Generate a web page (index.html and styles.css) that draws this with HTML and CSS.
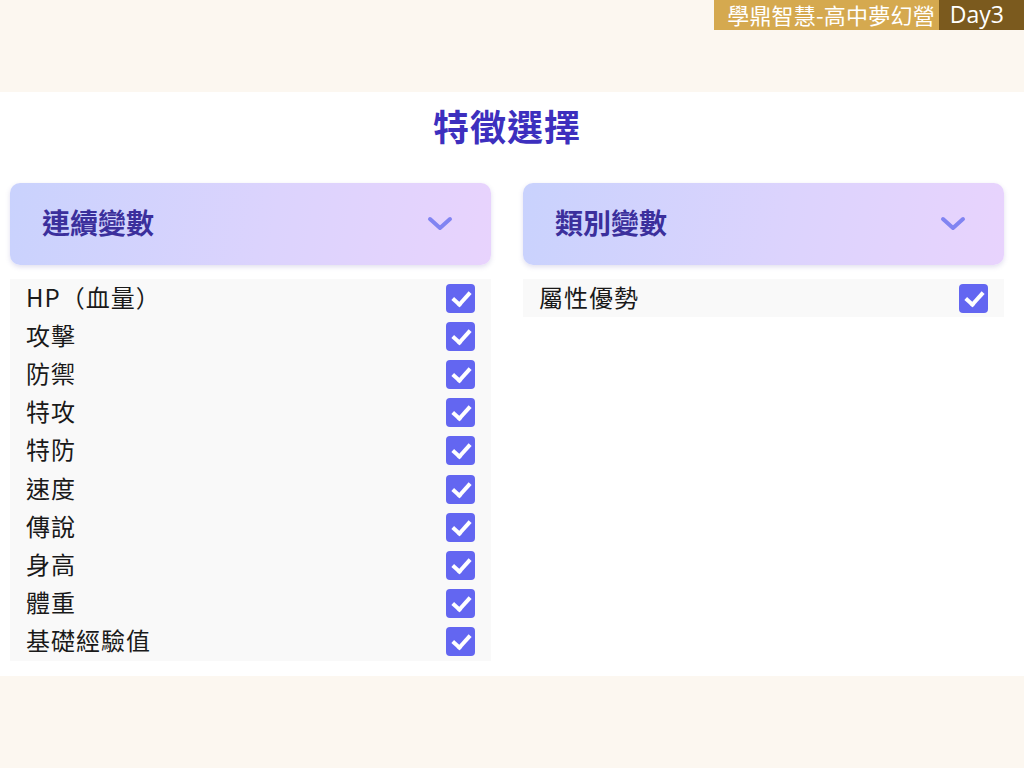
FILE: index.html
```html
<!DOCTYPE html>
<html lang="zh-Hant">
<head>
    <meta charset="UTF-8">
    <title>特徵選擇</title>
    <link rel="stylesheet" href="styles.css">
</head>
<body>
    <div class="badge">
        <span class="badge-name">學鼎智慧-高中夢幻營</span>
        <span class="badge-day">Day3</span>
    </div>

    <div class="panel">
        <h1 class="title">特徵選擇</h1>

        <div class="columns">
            <div class="column">
                <div class="group-header">
                    <span>連續變數</span>
                    <svg class="chevron" width="26" height="16" viewBox="0 0 26 16"><path d="M3 3 L13 12 L23 3" fill="none" stroke="#8184f2" stroke-width="4" stroke-linecap="round" stroke-linejoin="round"/></svg>
                </div>
                <ul class="var-list">
                    <li><span>HP（血量）</span><i class="check"></i></li>
                    <li><span>攻擊</span><i class="check"></i></li>
                    <li><span>防禦</span><i class="check"></i></li>
                    <li><span>特攻</span><i class="check"></i></li>
                    <li><span>特防</span><i class="check"></i></li>
                    <li><span>速度</span><i class="check"></i></li>
                    <li><span>傳說</span><i class="check"></i></li>
                    <li><span>身高</span><i class="check"></i></li>
                    <li><span>體重</span><i class="check"></i></li>
                    <li><span>基礎經驗值</span><i class="check"></i></li>
                </ul>
            </div>

            <div class="column">
                <div class="group-header">
                    <span>類別變數</span>
                    <svg class="chevron" width="26" height="16" viewBox="0 0 26 16"><path d="M3 3 L13 12 L23 3" fill="none" stroke="#8184f2" stroke-width="4" stroke-linecap="round" stroke-linejoin="round"/></svg>
                </div>
                <ul class="var-list">
                    <li><span>屬性優勢</span><i class="check"></i></li>
                </ul>
            </div>
        </div>
    </div>
</body>
</html>
```

FILE: styles.css
```css
* {
    margin: 0;
    padding: 0;
    box-sizing: border-box;
}

body {
    width: 1024px;
    height: 768px;
    background: #fcf7f0;
    font-family: "Noto Sans CJK TC", "Noto Sans", sans-serif;
    overflow: hidden;
}

.badge {
    height: 30px;
    display: flex;
    justify-content: flex-end;
    color: white;
    font-size: 22px;
    line-height: 29px;
}

.badge-name {
    background: #d5a94f;
    padding: 0 4px 0 13px;
    letter-spacing: 0.2px;
}

.badge-day {
    background: #7b5a1e;
    padding: 0 20px 0 11px;
    font-size: 23px;
    font-family: "Open Sans", "Noto Sans", sans-serif;
}

.panel {
    margin-top: 62px;
    height: 584px;
    background: white;
    padding: 0 20px 0 10px;
}

.title {
    text-align: center;
    font-size: 36px;
    line-height: 66px;
    color: #3d2fbe;
    font-weight: 700;
    letter-spacing: 1px;
}

.columns {
    margin-top: 25px;
    display: grid;
    grid-template-columns: 1fr 1fr;
    gap: 32px;
    align-items: start;
}

.group-header {
    height: 82px;
    border-radius: 10px;
    background: linear-gradient(100deg, #c9d2fd 0%, #dcd3fd 55%, #e8d3fd 100%);
    box-shadow: 0 2px 5px rgba(90, 80, 160, 0.18);
    display: flex;
    align-items: center;
    justify-content: space-between;
    padding: 0 38px 4px 32px;
    font-size: 28px;
    font-weight: 700;
    color: #3b2f9c;
}

.chevron {
    display: block;
    margin-top: 4px;
}

.var-list {
    list-style: none;
    margin-top: 14px;
    background: #f9f9f9;
}

.var-list li {
    height: 38.2px;
    display: flex;
    align-items: center;
    justify-content: space-between;
    padding: 0 16px 0 16px;
    font-size: 24px;
    letter-spacing: 1px;
    color: #1a1a1a;
}

.var-list li span {
    margin-top: -4px;
}

.check {
    width: 29px;
    height: 29px;
    border-radius: 4px;
    background: #6366f1;
    position: relative;
}

.check::after {
    content: "";
    position: absolute;
    left: 10px;
    top: 4px;
    width: 7px;
    height: 14px;
    border: solid white;
    border-width: 0 4px 4px 0;
    transform: rotate(42deg);
}
```
